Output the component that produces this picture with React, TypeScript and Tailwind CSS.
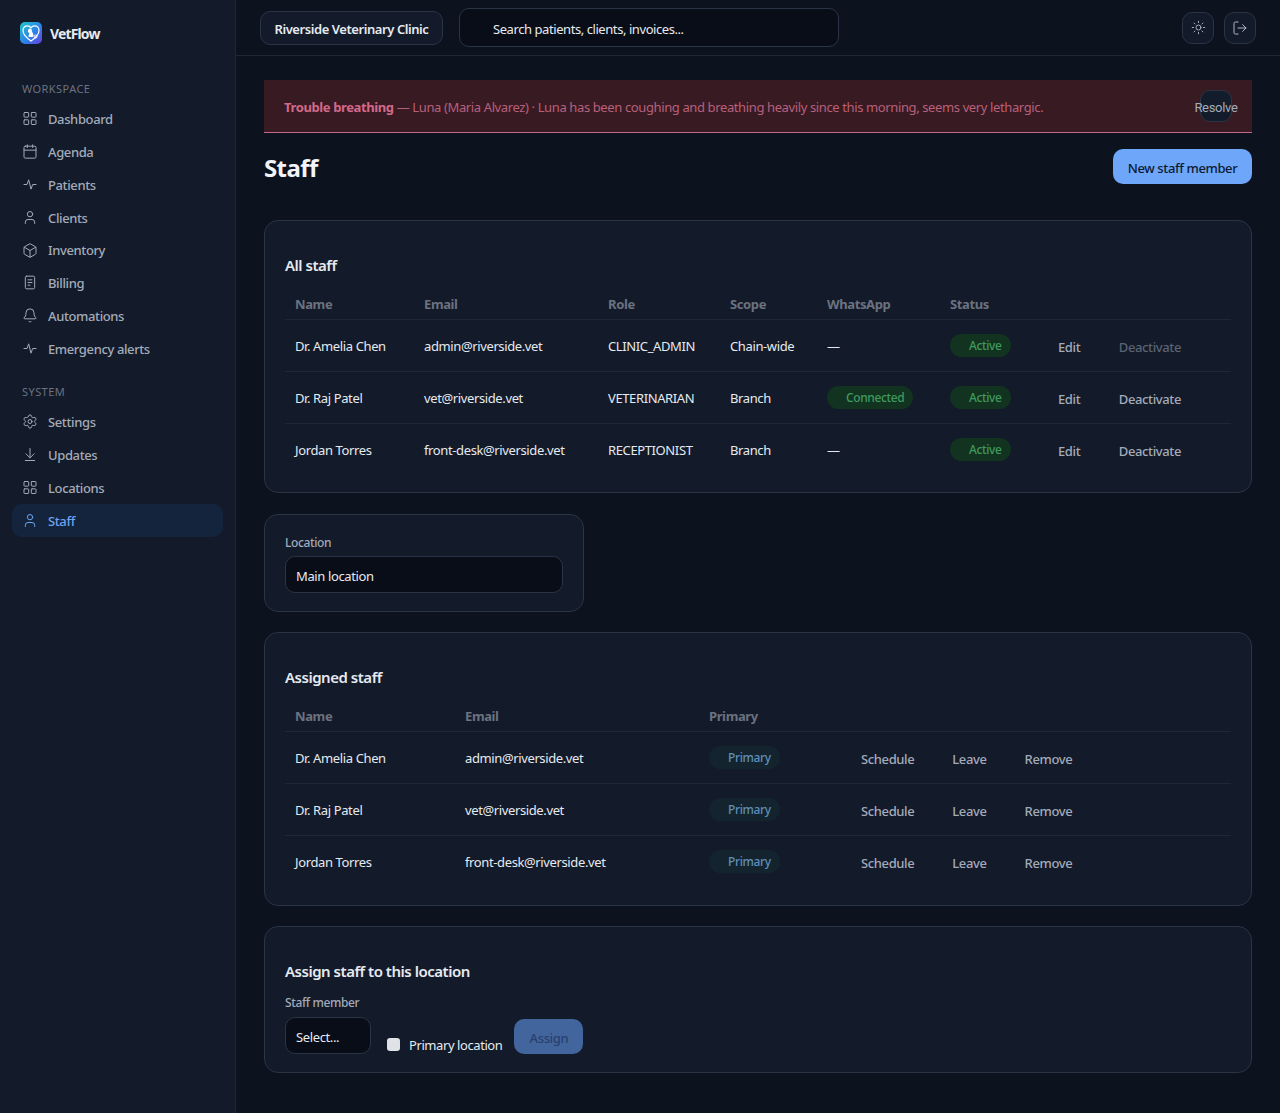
import {
  ArrowDownToLine,
  Bell,
  Box,
  Calendar,
  LayoutGrid,
  LogOut,
  Settings,
  Sun,
  User,
} from "lucide-react";
import type { ReactNode } from "react";

const font = { fontFamily: '"Noto Sans", sans-serif' };

function BillingIcon() {
  return (
    <svg width="16" height="16" viewBox="0 0 24 24" fill="none" stroke="currentColor" strokeWidth="1.5" strokeLinecap="round">
      <rect x="5" y="2.500" width="14" height="19" rx="2" />
      <path d="M9 8h6M9 12h6M9 16h3" />
    </svg>
  );
}

function PulseIcon() {
  return (
    <svg width="16" height="16" viewBox="0 0 24 24" fill="none" stroke="currentColor" strokeWidth="1.5" strokeLinecap="round" strokeLinejoin="round">
      <path d="M3 12h4.500l2.500-7 3.500 14 2.500-7H21" />
    </svg>
  );
}

function Logo() {
  return (
    <svg width="22" height="22" viewBox="0 0 22 22">
      <defs>
        <linearGradient id="lg" x1="0" y1="0" x2="1" y2="1">
          <stop offset="0" stopColor="#22c7c9" />
          <stop offset="0.55" stopColor="#2b83ea" />
          <stop offset="1" stopColor="#6a3fe0" />
        </linearGradient>
      </defs>
      <rect width="22" height="22" rx="5" fill="url(#lg)" />
      <path d="M11 19C6 15.500 3 12.500 3 8.500 3 5.500 5.200 3.800 7.400 3.800 9 3.800 10.300 4.600 11 5.800 11.700 4.600 13 3.800 14.600 3.800 16.800 3.800 19 5.500 19 8.500 19 12.500 16 15.500 11 19Z" fill="none" stroke="#fff" strokeWidth="1.2" />
      <path d="M10 6.500c1.500 0 2 1.300 1.800 2.500l1.500 3.500c.5 1.300 0 2.500-1.300 2.500H9.500c-1 0-1.300-1-.8-1.800l.8-1.700-1.500-1.500C7.500 8.500 8.500 6.500 10 6.500Z" fill="#fff" />
      <circle cx="15.500" cy="14.500" r="1.500" fill="none" stroke="#fff" strokeWidth="0.9" />
    </svg>
  );
}

function NavItem({ icon, label, active }: { icon: ReactNode; label: string; active?: boolean }) {
  return (
    <div
      className={`flex h-[32.8px] items-center gap-[10px] rounded-[10px] pl-[10px] text-[13px] font-medium ${
        active ? "bg-[#14243c] text-[#6ea3f0]" : "text-[#a3abb9]"
      }`}
    >
      <span className="flex w-[16px] -translate-y-[0.5px] justify-center">{icon}</span>
      <span className="pt-[1px]">{label}</span>
    </div>
  );
}

function Sidebar() {
  const i = { size: 16, strokeWidth: 1.5 };
  return (
    <aside className="flex w-[236px] shrink-0 flex-col border-r border-[#1f2735] bg-[#131a29] px-[12px]">
      <div className="flex items-center gap-[8px] pl-[8px] pt-[22px]">
        <Logo />
        <span className="text-[14px] font-bold tracking-[-0.85px] text-[#e6eaf0]">VetFlow</span>
      </div>
      <div className="mt-[35px] pl-[10px] text-[11px] leading-[20px] tracking-[0.04em] text-[#6b7280]">WORKSPACE</div>
      <nav className="mt-[4px]">
        <NavItem icon={<LayoutGrid {...i} />} label="Dashboard" />
        <NavItem icon={<Calendar {...i} />} label="Agenda" />
        <NavItem icon={<PulseIcon />} label="Patients" />
        <NavItem icon={<User {...i} />} label="Clients" />
        <NavItem icon={<Box {...i} />} label="Inventory" />
        <NavItem icon={<BillingIcon />} label="Billing" />
        <NavItem icon={<Bell {...i} />} label="Automations" />
        <NavItem icon={<PulseIcon />} label="Emergency alerts" />
      </nav>
      <div className="mt-[16.6px] pl-[10px] text-[11px] leading-[20px] tracking-[0.04em] text-[#6b7280]">SYSTEM</div>
      <nav className="mt-[4px]">
        <NavItem icon={<Settings {...i} />} label="Settings" />
        <NavItem icon={<ArrowDownToLine {...i} />} label="Updates" />
        <NavItem icon={<LayoutGrid {...i} />} label="Locations" />
        <NavItem icon={<User {...i} />} label="Staff" active />
      </nav>
    </aside>
  );
}

function Topbar() {
  return (
    <header className="flex h-[56px] items-center border-b border-[#1f2735] px-[24px]">
      <div className="flex h-[34px] w-[183px] items-center justify-center rounded-[10px] border border-[#2b3445] bg-[#131a29] pt-[5px] text-[13px] font-semibold tracking-[-0.43px] text-[#e6eaf0]">
        Riverside Veterinary Clinic
      </div>
      <div className="ml-[16px] flex h-[39px] w-[380px] items-center rounded-[10px] border border-[#2b3445] bg-[#090d17] pl-[33px] pt-[5px] text-[13px] tracking-[-0.43px] text-[#e6eaf0]">
        Search patients, clients, invoices...
      </div>
      <div className="ml-auto flex gap-[10px] text-[#b0b7c3]">
        <button className="flex size-[32px] items-center justify-center rounded-[10px] border border-[#2b3445] bg-[#131a29]">
          <Sun size={15} strokeWidth={1.5} />
        </button>
        <button className="flex size-[32px] items-center justify-center rounded-[10px] border border-[#2b3445] bg-[#131a29]">
          <LogOut size={16} strokeWidth={1.5} />
        </button>
      </div>
    </header>
  );
}

function Badge({ children, tone }: { children: ReactNode; tone: "green" | "blue" }) {
  return (
    <span
      className={`inline-block -translate-y-[2px] rounded-full pl-[19px] pr-[9px] text-[12px] font-medium leading-[23px] ${
        tone === "green" ? "bg-[#12331f] text-[#3f9a60]" : "bg-[#13242f] text-[#5f8fb8]"
      }`}
    >
      {children}
    </span>
  );
}

function Card({ children, className }: { children: ReactNode; className?: string }) {
  return <section className={`rounded-[14px] border border-[#2b3445] bg-[#131a29] ${className}`}>{children}</section>;
}

const h2 = "text-[15px] font-semibold leading-[22px] tracking-[-0.48px] text-[#e6eaf0]";
const th = "h-[29px] border-b border-[#1f2735] pl-[10px] pt-[5px] text-left align-top text-[13px] font-bold text-[#6b7280]";
const td = "h-[52px] border-b border-[#1f2735] pl-[10px] pt-[4px] text-[13px] text-[#e6eaf0]";
const lastTd = "h-[52px] border-b border-transparent pl-[10px] pt-[4px] text-[13px] text-[#e6eaf0]";
const action = "text-[13px] font-medium text-[#a3abb9]";

const staff = [
  { name: "Dr. Amelia Chen", email: "admin@riverside.vet", role: "CLINIC_ADMIN", scope: "Chain-wide", whatsapp: false, self: true },
  { name: "Dr. Raj Patel", email: "vet@riverside.vet", role: "VETERINARIAN", scope: "Branch", whatsapp: true, self: false },
  { name: "Jordan Torres", email: "front-desk@riverside.vet", role: "RECEPTIONIST", scope: "Branch", whatsapp: false, self: false },
];

function AllStaff() {
  return (
    <Card className="h-[273.4px] px-[20px] pt-[33px]">
      <h2 className={h2}>All staff</h2>
      <table className="mt-[14px] w-full table-fixed border-collapse">
        <colgroup>
          <col className="w-[129px]" />
          <col className="w-[184px]" />
          <col className="w-[122px]" />
          <col className="w-[97px]" />
          <col className="w-[123px]" />
          <col className="w-[108px]" />
          <col />
        </colgroup>
        <thead>
          <tr>
            {["Name", "Email", "Role", "Scope", "WhatsApp", "Status", ""].map((h) => (
              <th key={h} className={th}>{h}</th>
            ))}
          </tr>
        </thead>
        <tbody>
          {staff.map((s, idx) => {
            const c = idx === staff.length - 1 ? lastTd : td;
            return (
              <tr key={s.email}>
                <td className={c}>{s.name}</td>
                <td className={c}>{s.email}</td>
                <td className={c}>{s.role}</td>
                <td className={c}>{s.scope}</td>
                <td className={c}>{s.whatsapp ? <Badge tone="green">Connected</Badge> : "—"}</td>
                <td className={c}><Badge tone="green">Active</Badge></td>
                <td className={c}>
                  <div className="flex translate-y-[1px] gap-[38.5px]">
                    <span className={action}>Edit</span>
                    <span className={s.self ? "text-[13px] font-medium text-[#5b6372]" : action}>Deactivate</span>
                  </div>
                </td>
              </tr>
            );
          })}
        </tbody>
      </table>
    </Card>
  );
}

function AssignedStaff() {
  return (
    <Card className="h-[273.4px] px-[20px] pt-[33px]">
      <h2 className={h2}>Assigned staff</h2>
      <table className="mt-[14px] w-full table-fixed border-collapse">
        <colgroup>
          <col className="w-[170px]" />
          <col className="w-[244px]" />
          <col className="w-[152px]" />
          <col />
        </colgroup>
        <thead>
          <tr>
            {["Name", "Email", "Primary", ""].map((h) => (
              <th key={h} className={th}>{h}</th>
            ))}
          </tr>
        </thead>
        <tbody>
          {staff.map((s, idx) => {
            const c = idx === staff.length - 1 ? lastTd : td;
            return (
              <tr key={s.email}>
                <td className={c}>{s.name}</td>
                <td className={c}>{s.email}</td>
                <td className={c}><Badge tone="blue">Primary</Badge></td>
                <td className={c}>
                  <div className="flex translate-y-[1px] gap-[38px]">
                    <span className={action}>Schedule</span>
                    <span className={action}>Leave</span>
                    <span className={action}>Remove</span>
                  </div>
                </td>
              </tr>
            );
          })}
        </tbody>
      </table>
    </Card>
  );
}

export default function App() {
  return (
    <div className="flex h-[1113px] bg-[#0c121e] tracking-[-0.38px]" style={font}>
      <Sidebar />
      <div className="flex min-w-0 flex-1 flex-col">
        <Topbar />
        <main className="flex flex-col px-[28px] pt-[24px]">
          <div className="flex h-[53px] items-center justify-between border-b border-[#c4688a] bg-[#381b22] px-[20px] text-[13px] text-[#b85f7c]">
            <p className="pt-[3px]">
              <strong className="font-bold text-[#d4688a]">Trouble breathing</strong> — Luna (Maria Alvarez) · Luna has been coughing and breathing heavily since this morning, seems very lethargic.
            </p>
            <button className="flex size-[32px] shrink-0 items-center justify-center rounded-[10px] border border-[#2b3445] bg-[#131c2a] pt-[3px] font-['Roboto',sans-serif] text-[13px] tracking-[-0.3px] text-[#a3abb9]">
              Resolve
            </button>
          </div>
          <div className="mt-[16px] flex h-[35px] items-center justify-between">
            <h1 className="pt-[3px] text-[24px] font-bold tracking-[-0.6px] text-[#f1f4f8]">Staff</h1>
            <button className="h-[35px] w-[139px] rounded-[10px] bg-[#6ea6fa] pt-[5px] text-[13px] font-medium text-[#0c1a30]">
              New staff member
            </button>
          </div>
          <div className="mt-[36px] flex flex-col gap-[20.4px]">
            <AllStaff />
            <Card className="h-[98px] w-[320px] px-[20px] pt-[20px]">
              <label className="block text-[12px] font-medium leading-[16px] text-[#a3abb9]">Location</label>
              <div className="mt-[5px] flex h-[37px] items-center rounded-[10px] border border-[#2b3445] bg-[#090d17] pl-[10px] pt-[5px] text-[13px] text-[#e6eaf0]">
                Main location
              </div>
            </Card>
            <AssignedStaff />
            <Card className="h-[147px] px-[20px] pt-[33px]">
              <h2 className={h2}>Assign staff to this location</h2>
              <label className="mt-[13px] block text-[12px] font-medium leading-[16px] text-[#a3abb9]">Staff member</label>
              <div className="mt-[6px] flex items-end">
                <div className="flex h-[37px] w-[86px] items-center rounded-[10px] border border-[#2b3445] bg-[#090d17] pl-[10px] pt-[5px] text-[13px] text-[#e6eaf0]">
                  Select...
                </div>
                <span className="mb-[3px] ml-[16px] size-[13px] rounded-[3px] bg-[#dfe2e6]" />
                <span className="-mb-[1px] ml-[9px] text-[13px] leading-[20px] tracking-[-0.42px] text-[#e6eaf0]">Primary location</span>
                <button className="ml-[12px] h-[35px] w-[69px] rounded-[10px] bg-[#43659e] pt-[5px] text-[13px] font-medium text-[#28406e]">
                  Assign
                </button>
              </div>
            </Card>
          </div>
        </main>
      </div>
    </div>
  );
}
